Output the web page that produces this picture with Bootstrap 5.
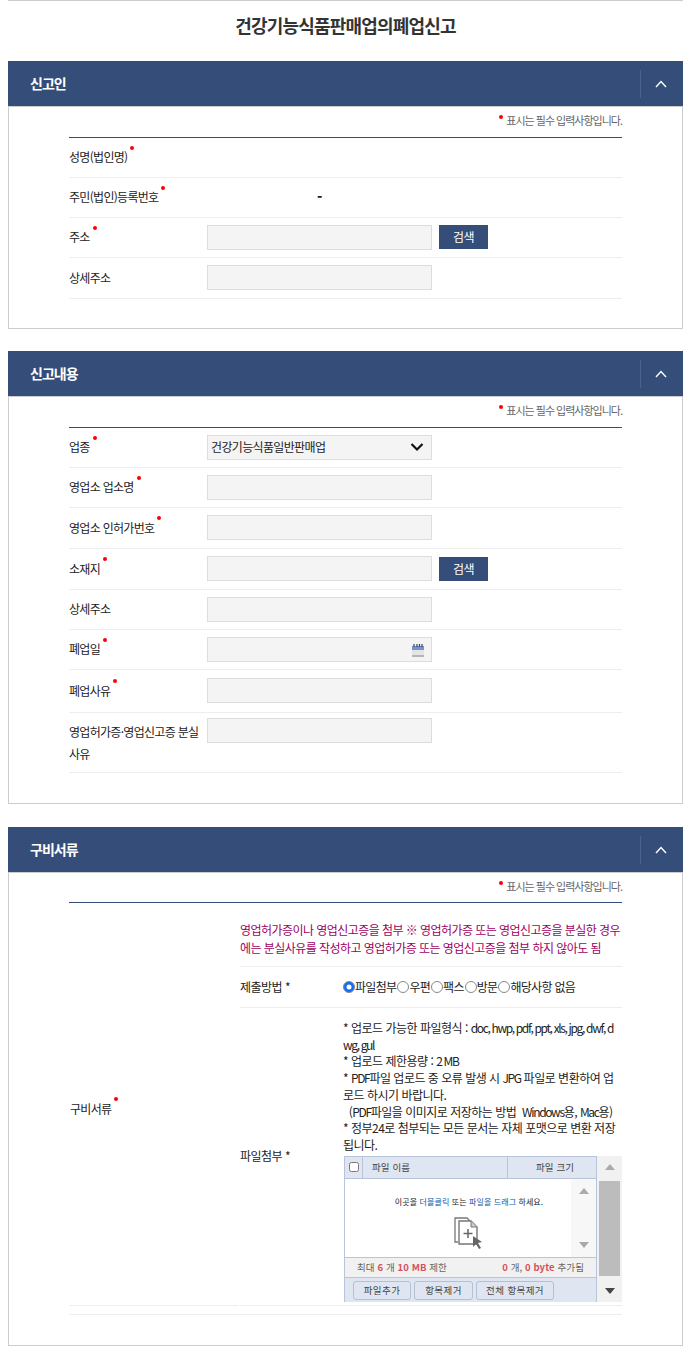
<!DOCTYPE html>
<html lang="ko">
<head>
<meta charset="utf-8">
<title>건강기능식품판매업의폐업신고</title>
<link rel="stylesheet" href="https://cdn.jsdelivr.net/npm/bootstrap@5.3.0/dist/css/bootstrap.min.css">
<style>
body{font-family:"Noto Sans CJK KR","Liberation Sans",sans-serif;font-size:12px;color:#222;letter-spacing:-.7px;background:#fff}
.page-wrap{margin:0 10px 9px 8px;border-top:1px solid #ccc}
.page-title{font-size:18px;font-weight:700;letter-spacing:-.8px;color:#333;height:60px;line-height:48px;margin:0;text-align:center}
.sect{margin-bottom:23px}
.sect-first{margin-bottom:22px}
.sect-first .sect-body{padding-bottom:29px}
.sect:last-child{margin-bottom:0}
.sect-head{height:45px;background:#344d79;color:#fff;padding-left:22px}
.sect-head h2{font-size:14px;font-weight:700;letter-spacing:-1px;margin:0}
.sect-toggle{width:43px;height:28px;border-left:1px solid #4b628a;padding-right:2px}
.sect-body{border:1px solid #ccc;padding:0 60px 30px}
.req-note{height:30px;color:#666;font-size:11px;letter-spacing:-1px;line-height:27px;text-align:right}
.req-note-sm{height:29px}
.dot{position:relative}
.dot::after{content:"";position:absolute;right:-7px;top:-2.5px;width:4px;height:4px;border-radius:50%;background:#f00}
.req-note .dot{margin-right:10px}
.req-note .dot::after{top:3px}
.rows{border-top:1px solid #344d79}
.frow{min-height:40px;border-bottom:1px solid #eee;display:flex;align-items:center}
.frow-41{min-height:41px}
.frow-43{min-height:43px}
.lab{width:138px;flex:none;line-height:23px;margin-top:-2px}
.fbox{width:225px;height:25px;flex:none;position:relative;margin-top:-1px}
.fbox .form-control,.fbox .form-select{height:25px;min-height:0;border-radius:0;border:1px solid #ddd;background-color:#f4f4f4;padding:0 3px;font-size:12px;letter-spacing:-.65px;color:#222;box-shadow:none;font-family:inherit}
.fbox .form-select{background-image:url("data:image/svg+xml,%3csvg xmlns='http://www.w3.org/2000/svg' viewBox='0 0 14 10'%3e%3cpath d='M1.500 2l5.500 5.500L12.500 2' fill='none' stroke='%23111' stroke-width='2.200'/%3e%3c/svg%3e");background-size:14px 10px;background-position:right 7px center}
.cal-ic{position:absolute;right:8px;top:7px}
.srch{width:49px;height:24px;margin:-1px 0 0 7px;padding:0;border:0;border-radius:0;background:#344d79;color:#fff;font-size:12px;letter-spacing:-.5px}
.srch:hover{background:#344d79;color:#fff}
.tall{align-items:flex-start;min-height:60px;padding-top:5px}
.tall .lab{margin-top:3px;line-height:22px}
.tall .fbox{margin-top:0}
.dash{font-weight:900;font-size:14px;margin-left:110px;margin-top:-2px}
.l3{width:170px;flex:none;padding:10px 0 0 1px;align-self:stretch;display:flex;align-items:center;border-bottom:1px solid #eee}
.r3{flex:1;min-width:0;margin-left:1px}
.notice{height:64px;padding-top:18px;color:#a0005f;line-height:18px;letter-spacing:-.55px;border-bottom:1px solid #eee;white-space:nowrap}
.sub{display:flex;border-bottom:1px solid #eee;align-items:center}
.sub-l{width:103px;flex:none;letter-spacing:-.5px}
.sub-r{flex:1;min-width:0}
.h-method{height:41px}
.radios label{display:inline-flex;align-items:center;margin-right:1px;white-space:nowrap}
.radios .form-check-input{width:12px;height:12px;margin:0;float:none;border-color:#888}
.guide{line-height:16.7px;padding-top:12px;white-space:nowrap;letter-spacing:-.5px}
.guide .tight{letter-spacing:-1.35px}
.upl{display:flex;margin:2px 0 3px 1px;height:146px}
.upl-main{width:253px;flex:none;border:1px solid #b8c4d9;border-bottom:0;background:#dfe6f1;font-size:9.5px;letter-spacing:.1px;color:#444;display:flex;flex-direction:column}
.upl-head{height:22px;display:flex;align-items:center;border-bottom:1px solid #b8c4d9;flex:none}
.upl-check{width:18px;height:100%;border-right:1px solid #b8c4d9;display:flex;align-items:center;justify-content:center;flex:none}
.upl-check input{width:10px;height:10px;margin:0;border-radius:1px;border-color:#777;float:none}
.upl-name{width:145px;padding-left:9px;height:100%;line-height:20px;border-right:1px solid #b8c4d9;flex:none}
.upl-size{flex:1;text-align:center;padding-left:6px;line-height:20px}
.upl-drop{height:79px;background:#fff;display:flex;border-bottom:1px solid #b8c4d9;flex:none}
.upl-drop-main{flex:1;text-align:center;padding:17px 0 0 22px;font-size:8px;letter-spacing:.1px;color:#222;line-height:12px}
.upl-drop-main b{font-weight:400;color:#0b57a8}
.upl-bar{width:25px;flex:none;background:#f7f7f7;display:flex;flex-direction:column;justify-content:space-between;align-items:center;padding:9px 0 9px}
.upl-stat{height:20px;background:#f1f1f1;border-bottom:1px solid #b8c4d9;display:flex;justify-content:space-between;align-items:center;padding:0 12px;flex:none;color:#666}
.upl-stat strong{color:#d5505f}
.upl-btns{flex:1;display:flex;gap:3px;padding:3px 0 0 8px}
.upl-btns .btn{height:19px;padding:0;font-size:9.5px;line-height:17px;letter-spacing:.4px;color:#444;background:#dfe6f1;border:1px solid #b4c0d3;border-radius:3px}
.upl-btn-a{width:58px}
.upl-btn-b{width:59px}
.upl-btn-c{width:78px}
.outer-sb{width:25px;flex:none;background:#f1f1f1;display:flex;flex-direction:column;align-items:center;justify-content:space-between;padding:8px 0 8px;position:relative}
.outer-thumb{width:21px;height:95px;background:#bcbcbc;margin:1px 0}
.tri-up,.tri-dn{width:0;height:0;border-left:5.5px solid transparent;border-right:5.5px solid transparent}
.tri-up{border-bottom:6px solid #aaa}
.tri-dn{border-top:6px solid #aaa}
.tri-dk{border-top-color:#444}
.endline{height:9px;border-bottom:1px solid #eee}
</style>
</head>
<body>
<div class="page-wrap">
<h1 class="page-title">건강기능식품판매업의폐업신고</h1>

<section class="sect sect-first">
  <div class="sect-head d-flex align-items-center justify-content-between">
    <h2>신고인</h2>
    <div class="sect-toggle d-flex align-items-center justify-content-center"><svg width="12" height="8" viewBox="0 0 12 8"><path d="M1 7l5-5.500L11 7" fill="none" stroke="#fff" stroke-width="1.400"/></svg></div>
  </div>
  <div class="sect-body">
    <div class="req-note"><span class="dot"></span>표시는 필수 입력사항입니다.</div>
    <div class="rows">
      <div class="frow"><div class="lab"><span class="dot">성명(법인명)</span></div></div>
      <div class="frow"><div class="lab"><span class="dot">주민(법인)등록번호</span></div><span class="dash">-</span></div>
      <div class="frow"><div class="lab"><span class="dot">주소</span></div><div class="fbox"><input class="form-control" type="text"></div><button type="button" class="btn srch">검색</button></div>
      <div class="frow frow-41"><div class="lab">상세주소</div><div class="fbox"><input class="form-control" type="text"></div></div>
    </div>
  </div>
</section>

<section class="sect">
  <div class="sect-head d-flex align-items-center justify-content-between">
    <h2>신고내용</h2>
    <div class="sect-toggle d-flex align-items-center justify-content-center"><svg width="12" height="8" viewBox="0 0 12 8"><path d="M1 7l5-5.500L11 7" fill="none" stroke="#fff" stroke-width="1.400"/></svg></div>
  </div>
  <div class="sect-body">
    <div class="req-note"><span class="dot"></span>표시는 필수 입력사항입니다.</div>
    <div class="rows">
      <div class="frow"><div class="lab"><span class="dot">업종</span></div><div class="fbox"><select class="form-select"><option>건강기능식품일반판매업</option></select></div></div>
      <div class="frow"><div class="lab"><span class="dot">영업소 업소명</span></div><div class="fbox"><input class="form-control" type="text"></div></div>
      <div class="frow frow-41"><div class="lab"><span class="dot">영업소 인허가번호</span></div><div class="fbox"><input class="form-control" type="text"></div></div>
      <div class="frow frow-41"><div class="lab"><span class="dot">소재지</span></div><div class="fbox"><input class="form-control" type="text"></div><button type="button" class="btn srch">검색</button></div>
      <div class="frow"><div class="lab">상세주소</div><div class="fbox"><input class="form-control" type="text"></div></div>
      <div class="frow"><div class="lab"><span class="dot">폐업일</span></div><div class="fbox"><input class="form-control" type="text">
        <svg class="cal-ic" width="12" height="13" viewBox="0 0 12 13"><rect y="2" width="12" height="11" fill="#e4e4e4"/><rect y="11" width="12" height="2" fill="#b5b5b5"/><rect y="2" width="12" height="4" fill="#6f93d6"/><path d="M2 0v3M5 0v3M7.500 0v3M10 0v3" stroke="#444" stroke-width="1.200"/></svg></div></div>
      <div class="frow frow-43"><div class="lab"><span class="dot">폐업사유</span></div><div class="fbox"><input class="form-control" type="text"></div></div>
      <div class="frow tall"><div class="lab">영업허가증·영업신고증 분실<br>사유</div><div class="fbox"><input class="form-control" type="text"></div></div>
    </div>
  </div>
</section>

<section class="sect">
  <div class="sect-head d-flex align-items-center justify-content-between">
    <h2>구비서류</h2>
    <div class="sect-toggle d-flex align-items-center justify-content-center"><svg width="12" height="8" viewBox="0 0 12 8"><path d="M1 7l5-5.500L11 7" fill="none" stroke="#fff" stroke-width="1.400"/></svg></div>
  </div>
  <div class="sect-body">
    <div class="req-note req-note-sm"><span class="dot"></span>표시는 필수 입력사항입니다.</div>
    <div class="rows d-flex">
      <div class="l3"><span class="dot">구비서류</span></div>
      <div class="r3">
        <div class="notice">영업허가증이나 영업신고증을 첨부 ※ 영업허가증 또는 영업신고증을 분실한 경우<br>에는 분실사유를 작성하고 영업허가증 또는 영업신고증을 첨부 하지 않아도 됨</div>
        <div class="sub h-method">
          <div class="sub-l">제출방법 *</div>
          <div class="sub-r radios d-flex flex-wrap">
            <label><input class="form-check-input" type="radio" name="m" checked>파일첨부</label>
            <label><input class="form-check-input" type="radio" name="m">우편</label>
            <label><input class="form-check-input" type="radio" name="m">팩스</label>
            <label><input class="form-check-input" type="radio" name="m">방문</label>
            <label><input class="form-check-input" type="radio" name="m">해당사항 없음</label>
          </div>
        </div>
        <div class="sub">
          <div class="sub-l">파일첨부 *</div>
          <div class="sub-r">
            <div class="guide">* 업로드 가능한 파일형식 : <span class="tight">doc, hwp, pdf, ppt, xls, jpg, dwf, d</span><br><span class="tight">wg, gul</span><br>* 업로드 제한용량 : <span class="tight">2 MB</span><br>* <span class="tight">PDF</span>파일 업로드 중 오류 발생 시 <span class="tight">JPG</span> 파일로 변환하여 업<br>로드 하시기 바랍니다.<br>&nbsp;&nbsp;(<span class="tight">PDF</span>파일을 이미지로 저장하는 방법 &nbsp;<span class="tight">Windows</span>용, <span class="tight">Mac</span>용)<br>* 정부24로 첨부되는 모든 문서는 자체 포맷으로 변환 저장<br>됩니다.</div>
            <div class="upl">
              <div class="upl-main">
                <div class="upl-head">
                  <div class="upl-check"><input class="form-check-input" type="checkbox"></div>
                  <div class="upl-name">파일 이름</div>
                  <div class="upl-size">파일 크기</div>
                </div>
                <div class="upl-drop">
                  <div class="upl-drop-main">이곳을 <b>더블클릭</b> 또는 <b>파일을 드래그</b> 하세요.
                    <div class="mt-2"><svg width="30" height="34" viewBox="0 0 30 34"><path d="M4 26H1V2h12l3 3" fill="none" stroke="#777" stroke-width="1.300"/><path d="M5 5h12l6 6v17H5z" fill="#fff" stroke="#777" stroke-width="1.400"/><path d="M17 5v6h6" fill="#ccc" stroke="#777"/><path d="M14 13v9M9.500 17.500h9" stroke="#666" stroke-width="1.500"/><path d="M19 20l0 11 3-3 3 5 2-1-3-5 4-1z" fill="#666"/></svg></div>
                  </div>
                  <div class="upl-bar"><span class="tri-up"></span><span class="tri-dn"></span></div>
                </div>
                <div class="upl-stat"><span>최대 <strong>6</strong> 개 <strong>10 MB</strong> 제한</span><span><strong>0</strong> 개, <strong>0 byte</strong> 추가됨</span></div>
                <div class="upl-btns">
                  <button type="button" class="btn upl-btn-a">파일추가</button>
                  <button type="button" class="btn upl-btn-b">항목제거</button>
                  <button type="button" class="btn upl-btn-c">전체 항목제거</button>
                </div>
              </div>
              <div class="outer-sb"><span class="tri-up"></span><span class="outer-thumb"></span><span class="tri-dn tri-dk"></span></div>
            </div>
          </div>
        </div>
      </div>
    </div>
    <div class="endline"></div>
  </div>
</section>
</div>
<script src="https://cdn.jsdelivr.net/npm/bootstrap@5.3.0/dist/js/bootstrap.bundle.min.js"></script>
</body>
</html>
